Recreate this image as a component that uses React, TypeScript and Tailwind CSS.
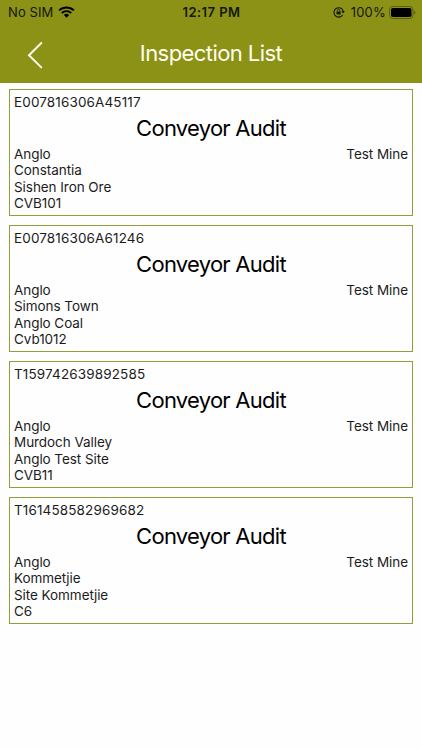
interface Inspection {
  id: string;
  title: string;
  company: string;
  area: string;
  site: string;
  conveyor: string;
  mine: string;
}

const inspections: Inspection[] = [
  {
    id: 'E007816306A45117',
    title: 'Conveyor Audit',
    company: 'Anglo',
    area: 'Constantia',
    site: 'Sishen Iron Ore',
    conveyor: 'CVB101',
    mine: 'Test Mine',
  },
  {
    id: 'E007816306A61246',
    title: 'Conveyor Audit',
    company: 'Anglo',
    area: 'Simons Town',
    site: 'Anglo Coal',
    conveyor: 'Cvb1012',
    mine: 'Test Mine',
  },
  {
    id: 'T159742639892585',
    title: 'Conveyor Audit',
    company: 'Anglo',
    area: 'Murdoch Valley',
    site: 'Anglo Test Site',
    conveyor: 'CVB11',
    mine: 'Test Mine',
  },
  {
    id: 'T161458582969682',
    title: 'Conveyor Audit',
    company: 'Anglo',
    area: 'Kommetjie',
    site: 'Site Kommetjie',
    conveyor: 'C6',
    mine: 'Test Mine',
  },
];

export default function App() {
  return (
    <div className="min-h-screen bg-[#fefefe] font-['Inter','Liberation_Sans',sans-serif] text-[#1c1c1c]">
      <header className="h-[83px] bg-[#8b9216]">
        <StatusBar />
        <NavBar />
      </header>
      <main className="flex flex-col gap-[9px] px-[9px] pt-1.5">
        {inspections.map((inspection) => (
          <InspectionCard key={inspection.id} inspection={inspection} />
        ))}
      </main>
    </div>
  );
}

function StatusBar() {
  return (
    <div className="grid h-6 grid-cols-3 items-center pr-1.5 pl-2 text-[13px] leading-6 text-[#15170a]">
      <div className="flex items-center gap-[5px]">
        <span className="tracking-[0.1px]">No SIM</span>
        <WifiIcon />
      </div>
      <span className="pr-px text-center font-semibold tracking-[0.45px] whitespace-nowrap">12:17 PM</span>
      <div className="flex items-center justify-end">
        <RotationLockIcon />
        <span className="mr-[3px] ml-1.5 tracking-[0.2px]">100%</span>
        <BatteryIcon />
      </div>
    </div>
  );
}

function NavBar() {
  return (
    <div className="grid h-[59px] grid-cols-[60px_1fr_60px] items-center">
      <button aria-label="Back" className="pt-[3px] pl-[27px]">
        <svg width="16" height="28" viewBox="0 0 16 28" fill="none" stroke="#fffff0" strokeWidth="2" strokeLinecap="round">
          <path d="M14.3 2 2 14.2 14.3 26.4" />
        </svg>
      </button>
      <h1 className="text-center text-[22px] leading-[59px] tracking-[-0.57px] text-[#fffff0]">Inspection List</h1>
    </div>
  );
}

function InspectionCard({ inspection }: { inspection: Inspection }) {
  return (
    <article className="h-[127px] border border-[#92a03c] px-1 pt-[3.7px] text-[13.5px] leading-[16.3px]">
      <p className="tracking-[0.13px]">{inspection.id}</p>
      <h2 className="text-center text-[22px] leading-9 tracking-[-0.73px] text-black">{inspection.title}</h2>
      <div className="flex justify-between tracking-[-0.06px]">
        <div>
          <p>{inspection.company}</p>
          <p>{inspection.area}</p>
          <p>{inspection.site}</p>
          <p>{inspection.conveyor}</p>
        </div>
        <p>{inspection.mine}</p>
      </div>
    </article>
  );
}

function WifiIcon() {
  return (
    <svg width="17" height="12" viewBox="0 0 18 12" fill="none" stroke="#000" strokeWidth="2.1">
      <path d="M1.2 4.3a11.2 11.2 0 0 1 15.6 0" />
      <path d="M4 7.1a7.2 7.2 0 0 1 10 0" />
      <path d="M9 12 6.2 9.2a4 4 0 0 1 5.6 0Z" fill="#000" stroke="none" />
    </svg>
  );
}

function RotationLockIcon() {
  return (
    <svg width="12" height="12" viewBox="0 0 12 12" fill="none" stroke="#15170a">
      <path d="M9.6 9A4.7 4.7 0 1 1 10.2 5.2" strokeWidth="1.1" />
      <path d="M8.4 5.1h3.4l-1.7 2.3Z" fill="#15170a" stroke="none" />
      <rect x="3.5" y="5.4" width="4.2" height="3.1" rx="0.4" fill="#15170a" stroke="none" />
      <path d="M4.4 5.5V4.4a1.2 1.2 0 0 1 2.4 0v1.1" strokeWidth="0.8" />
    </svg>
  );
}

function BatteryIcon() {
  return (
    <svg width="27" height="13" viewBox="0 0 27 13">
      <rect x="0.5" y="0.5" width="23.5" height="12" rx="3.2" fill="none" stroke="#5b6012" />
      <rect x="2" y="2" width="20.5" height="9" rx="1.8" fill="#000" />
      <path d="M25.2 4.4c1.7.6 1.7 3.6 0 4.2Z" fill="#5b6012" />
    </svg>
  );
}
